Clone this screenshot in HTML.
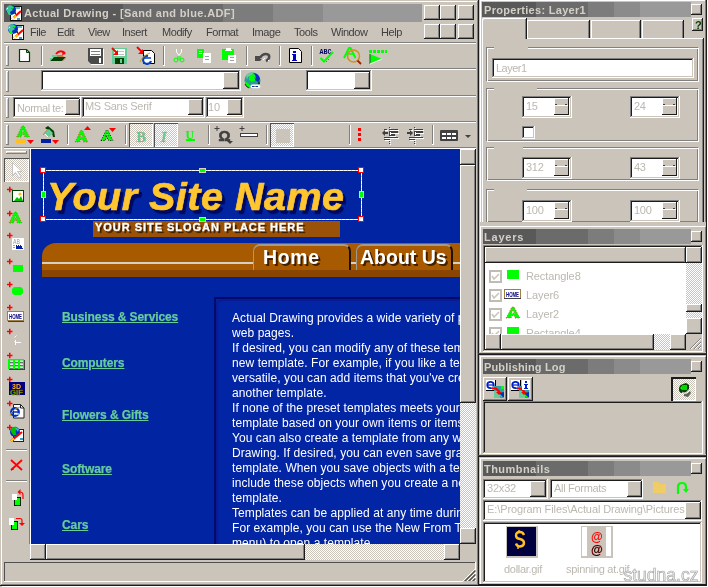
<!DOCTYPE html><html><head><meta charset="utf-8"><style>
html,body{margin:0;padding:0;width:708px;height:587px;overflow:hidden;background:#cac4bb;position:relative;font-family:"Liberation Sans",sans-serif}
div{position:absolute;box-sizing:border-box}
</style></head><body><div style="left:0;top:0;width:708px;height:587px;overflow:hidden;will-change:transform;background:#cac4bb">
<div style="left:0px;top:0px;width:479px;height:586px;background:#cac4bb;box-shadow:inset -1px -1px #1c1c1c,inset 1px 1px #cac4bb,inset -2px -2px #808080,inset 2px 2px #ffffff"></div>
<div style="left:2px;top:586px;width:477px;height:1px;background:#fff"></div>
<div style="left:4px;top:4px;width:119px;height:18px;background:#595959"></div>
<div style="left:123px;top:4px;width:100px;height:18px;background:#6b6b6b"></div>
<div style="left:223px;top:4px;width:50px;height:18px;background:#7c7c7c"></div>
<div style="left:273px;top:4px;width:50px;height:18px;background:#8b8b8b"></div>
<div style="left:323px;top:4px;width:99px;height:18px;background:#999999"></div>
<div style="left:24px;top:8px;font-size:11px;line-height:11px;color:#d4d0c8;font-weight:bold;font-style:normal;letter-spacing:0.36px;white-space:pre;">Actual Drawing - [Sand and blue.ADF]</div>
<div style="left:424px;top:5px;width:16px;height:15px;background:#cac4bb;box-shadow:inset -1px -1px #1c1c1c,inset 1px 1px #ffffff,inset -2px -2px #808080,inset 2px 2px #cac4bb;"></div>
<div style="left:440px;top:5px;width:16px;height:15px;background:#cac4bb;box-shadow:inset -1px -1px #1c1c1c,inset 1px 1px #ffffff,inset -2px -2px #808080,inset 2px 2px #cac4bb;"></div>
<div style="left:458px;top:5px;width:16px;height:15px;background:#cac4bb;box-shadow:inset -1px -1px #1c1c1c,inset 1px 1px #ffffff,inset -2px -2px #808080,inset 2px 2px #cac4bb;"></div>
<div style="left:424px;top:24px;width:16px;height:15px;background:#cac4bb;box-shadow:inset -1px -1px #1c1c1c,inset 1px 1px #ffffff,inset -2px -2px #808080,inset 2px 2px #cac4bb;"></div>
<div style="left:440px;top:24px;width:16px;height:15px;background:#cac4bb;box-shadow:inset -1px -1px #1c1c1c,inset 1px 1px #ffffff,inset -2px -2px #808080,inset 2px 2px #cac4bb;"></div>
<div style="left:458px;top:24px;width:16px;height:15px;background:#cac4bb;box-shadow:inset -1px -1px #1c1c1c,inset 1px 1px #ffffff,inset -2px -2px #808080,inset 2px 2px #cac4bb;"></div>
<div style="left:30px;top:27px;font-size:11px;line-height:11px;color:#404040;font-weight:normal;font-style:normal;letter-spacing:-0.45px;white-space:pre;">File</div>
<div style="left:57px;top:27px;font-size:11px;line-height:11px;color:#404040;font-weight:normal;font-style:normal;letter-spacing:-0.45px;white-space:pre;">Edit</div>
<div style="left:88px;top:27px;font-size:11px;line-height:11px;color:#404040;font-weight:normal;font-style:normal;letter-spacing:-0.45px;white-space:pre;">View</div>
<div style="left:122px;top:27px;font-size:11px;line-height:11px;color:#404040;font-weight:normal;font-style:normal;letter-spacing:-0.45px;white-space:pre;">Insert</div>
<div style="left:162px;top:27px;font-size:11px;line-height:11px;color:#404040;font-weight:normal;font-style:normal;letter-spacing:-0.45px;white-space:pre;">Modify</div>
<div style="left:206px;top:27px;font-size:11px;line-height:11px;color:#404040;font-weight:normal;font-style:normal;letter-spacing:-0.45px;white-space:pre;">Format</div>
<div style="left:252px;top:27px;font-size:11px;line-height:11px;color:#404040;font-weight:normal;font-style:normal;letter-spacing:-0.45px;white-space:pre;">Image</div>
<div style="left:294px;top:27px;font-size:11px;line-height:11px;color:#404040;font-weight:normal;font-style:normal;letter-spacing:-0.45px;white-space:pre;">Tools</div>
<div style="left:331px;top:27px;font-size:11px;line-height:11px;color:#404040;font-weight:normal;font-style:normal;letter-spacing:-0.45px;white-space:pre;">Window</div>
<div style="left:381px;top:27px;font-size:11px;line-height:11px;color:#404040;font-weight:normal;font-style:normal;letter-spacing:-0.45px;white-space:pre;">Help</div>
<div style="left:4px;top:42px;width:472px;height:1px;background:#808080"></div>
<div style="left:4px;top:43px;width:472px;height:1px;background:#ffffff"></div>
<div style="left:4px;top:68px;width:472px;height:1px;background:#808080"></div>
<div style="left:4px;top:69px;width:472px;height:1px;background:#ffffff"></div>
<div style="left:4px;top:95px;width:472px;height:1px;background:#808080"></div>
<div style="left:4px;top:96px;width:472px;height:1px;background:#ffffff"></div>
<div style="left:4px;top:121px;width:472px;height:1px;background:#808080"></div>
<div style="left:4px;top:122px;width:472px;height:1px;background:#ffffff"></div>
<div style="left:6px;top:46px;width:3px;height:20px;background:#cac4bb;box-shadow:inset -1px -1px #808080,inset 1px 1px #ffffff;"></div>
<div style="left:6px;top:71px;width:3px;height:21px;background:#cac4bb;box-shadow:inset -1px -1px #808080,inset 1px 1px #ffffff;"></div>
<div style="left:6px;top:98px;width:3px;height:20px;background:#cac4bb;box-shadow:inset -1px -1px #808080,inset 1px 1px #ffffff;"></div>
<div style="left:6px;top:125px;width:3px;height:20px;background:#cac4bb;box-shadow:inset -1px -1px #808080,inset 1px 1px #ffffff;"></div>
<div style="left:41px;top:46px;width:2px;height:20px;background:#cac4bb;box-shadow:inset -1px -1px #ffffff,inset 1px 1px #808080;"></div>
<div style="left:163px;top:46px;width:2px;height:20px;background:#cac4bb;box-shadow:inset -1px -1px #ffffff,inset 1px 1px #808080;"></div>
<div style="left:246px;top:46px;width:2px;height:20px;background:#cac4bb;box-shadow:inset -1px -1px #ffffff,inset 1px 1px #808080;"></div>
<div style="left:279px;top:46px;width:2px;height:20px;background:#cac4bb;box-shadow:inset -1px -1px #ffffff,inset 1px 1px #808080;"></div>
<div style="left:311px;top:46px;width:2px;height:20px;background:#cac4bb;box-shadow:inset -1px -1px #ffffff,inset 1px 1px #808080;"></div>
<div style="left:67px;top:125px;width:2px;height:20px;background:#cac4bb;box-shadow:inset -1px -1px #ffffff,inset 1px 1px #808080;"></div>
<div style="left:125px;top:125px;width:2px;height:20px;background:#cac4bb;box-shadow:inset -1px -1px #ffffff,inset 1px 1px #808080;"></div>
<div style="left:208px;top:125px;width:2px;height:20px;background:#cac4bb;box-shadow:inset -1px -1px #ffffff,inset 1px 1px #808080;"></div>
<div style="left:266px;top:125px;width:2px;height:20px;background:#cac4bb;box-shadow:inset -1px -1px #ffffff,inset 1px 1px #808080;"></div>
<div style="left:349px;top:125px;width:2px;height:20px;background:#cac4bb;box-shadow:inset -1px -1px #ffffff,inset 1px 1px #808080;"></div>
<div style="left:432px;top:125px;width:2px;height:20px;background:#cac4bb;box-shadow:inset -1px -1px #ffffff,inset 1px 1px #808080;"></div>
<div style="left:41px;top:70px;width:200px;height:21px;background:#fff;box-shadow:inset -1px -1px #ffffff,inset 1px 1px #808080,inset -2px -2px #cac4bb,inset 2px 2px #1c1c1c;"></div>
<div style="left:223px;top:72px;width:16px;height:17px;background:#cac4bb;box-shadow:inset -1px -1px #1c1c1c,inset 1px 1px #ffffff,inset -2px -2px #808080,inset 2px 2px #cac4bb;"></div>
<div style="left:306px;top:70px;width:66px;height:21px;background:#fff;box-shadow:inset -1px -1px #ffffff,inset 1px 1px #808080,inset -2px -2px #cac4bb,inset 2px 2px #1c1c1c;"></div>
<div style="left:354px;top:72px;width:16px;height:17px;background:#cac4bb;box-shadow:inset -1px -1px #1c1c1c,inset 1px 1px #ffffff,inset -2px -2px #808080,inset 2px 2px #cac4bb;"></div>
<div style="left:13px;top:97px;width:68px;height:21px;background:#fff;box-shadow:inset -1px -1px #ffffff,inset 1px 1px #808080,inset -2px -2px #cac4bb,inset 2px 2px #1c1c1c;"></div>
<div style="left:65px;top:99px;width:15px;height:16px;background:#cac4bb;box-shadow:inset -1px -1px #1c1c1c,inset 1px 1px #ffffff,inset -2px -2px #808080,inset 2px 2px #cac4bb;"></div>
<div style="left:17px;top:103px;font-size:11px;line-height:11px;color:#bcb8b0;font-weight:normal;font-style:normal;letter-spacing:-0.45px;white-space:pre;">Normal te:</div>
<div style="left:82px;top:97px;width:123px;height:21px;background:#fff;box-shadow:inset -1px -1px #ffffff,inset 1px 1px #808080,inset -2px -2px #cac4bb,inset 2px 2px #1c1c1c;"></div>
<div style="left:188px;top:99px;width:15px;height:16px;background:#cac4bb;box-shadow:inset -1px -1px #1c1c1c,inset 1px 1px #ffffff,inset -2px -2px #808080,inset 2px 2px #cac4bb;"></div>
<div style="left:85px;top:101px;font-size:11px;line-height:11px;color:#bcb8b0;font-weight:normal;font-style:normal;letter-spacing:-0.3px;white-space:pre;">MS Sans Serif</div>
<div style="left:206px;top:97px;width:38px;height:21px;background:#fff;box-shadow:inset -1px -1px #ffffff,inset 1px 1px #808080,inset -2px -2px #cac4bb,inset 2px 2px #1c1c1c;"></div>
<div style="left:227px;top:99px;width:15px;height:16px;background:#cac4bb;box-shadow:inset -1px -1px #1c1c1c,inset 1px 1px #ffffff,inset -2px -2px #808080,inset 2px 2px #cac4bb;"></div>
<div style="left:208px;top:102px;font-size:11px;line-height:11px;color:#bcb8b0;font-weight:normal;font-style:normal;letter-spacing:0px;white-space:pre;">10</div>
<div style="left:129px;top:123px;width:24px;height:24px;background:repeating-conic-gradient(#fff 0 25%,#cac4bb 0 50%) 0 0/2px 2px"></div>
<div style="left:129px;top:123px;width:24px;height:24px;box-shadow:inset 1px 1px #505050,inset -1px -1px #ffffff"></div>
<div style="left:154px;top:123px;width:24px;height:24px;background:repeating-conic-gradient(#fff 0 25%,#cac4bb 0 50%) 0 0/2px 2px"></div>
<div style="left:154px;top:123px;width:24px;height:24px;box-shadow:inset 1px 1px #505050,inset -1px -1px #ffffff"></div>
<div style="left:270px;top:123px;width:24px;height:24px;background:repeating-conic-gradient(#fff 0 25%,#cac4bb 0 50%) 0 0/2px 2px"></div>
<div style="left:270px;top:123px;width:24px;height:24px;box-shadow:inset 1px 1px #505050,inset -1px -1px #ffffff"></div>
<div style="left:6px;top:151px;width:21px;height:3px;background:#cac4bb;box-shadow:inset -1px -1px #808080,inset 1px 1px #ffffff;"></div>
<div style="left:4px;top:158px;width:25px;height:24px;background:repeating-conic-gradient(#fff 0 25%,#cac4bb 0 50%) 0 0/2px 2px"></div>
<div style="left:4px;top:158px;width:25px;height:24px;box-shadow:inset 1px 1px #505050,inset -1px -1px #ffffff"></div>
<div style="left:4px;top:147px;width:472px;height:1px;background:#808080"></div>
<div style="left:4px;top:148px;width:472px;height:1px;background:#ffffff"></div>
<div style="left:29px;top:149px;width:1px;height:395px;background:#808080"></div>
<div style="left:30px;top:149px;width:1px;height:395px;background:#ffffff"></div>
<div style="left:6px;top:449px;width:21px;height:1px;background:#808080"></div>
<div style="left:6px;top:450px;width:21px;height:1px;background:#ffffff"></div>
<div style="left:6px;top:480px;width:21px;height:1px;background:#808080"></div>
<div style="left:6px;top:481px;width:21px;height:1px;background:#ffffff"></div>
<div style="left:31px;top:149px;width:429px;height:395px;background:#0024a2;overflow:hidden"></div>
<div style="left:31px;top:149px;width:429px;height:395px;overflow:hidden"><div style="left:-31px;top:-149px;width:708px;height:587px"><div style="left:47px;top:177px;font-size:39.5px;line-height:39.5px;color:#ffc630;font-weight:bold;font-style:italic;letter-spacing:0.5px;white-space:pre;-webkit-text-stroke:0.7px #ffc630;text-shadow:3px 3px 0 #000860,3px 4px 1px #000860">Your Site Name</div><div style="left:93px;top:221px;width:247px;height:16px;background:#9a5208"></div><div style="left:95px;top:222px;font-size:11px;line-height:11px;color:#fff;font-weight:bold;font-style:normal;letter-spacing:0.97px;white-space:pre;-webkit-text-stroke:0.3px #fff;text-shadow:2px 2px 1px #301800">YOUR SITE SLOGAN PLACE HERE</div><div style="left:42px;top:243px;width:418px;height:20px;background:#a85a00;border-top-left-radius:14px 13px"></div><div style="left:42px;top:262px;width:418px;height:2px;background:#d4d0c4"></div><div style="left:42px;top:264px;width:418px;height:6px;background:#a85a00"></div><div style="left:42px;top:270px;width:418px;height:7px;background:#8a4600"></div><div style="left:253px;top:244px;width:98px;height:26px;background:#a85a00;border-top-left-radius:7px;border-top-right-radius:7px;border-top:2px solid #a09a94;border-left:1px solid #a09a94;border-right:2px solid #201000"></div><div style="left:263px;top:248px;font-size:19.5px;line-height:19.5px;color:#fff;font-weight:bold;font-style:normal;letter-spacing:0.6px;white-space:pre;text-shadow:2px 2px 0 #402000">Home</div><div style="left:356px;top:244px;width:97px;height:26px;background:#a85a00;border-top-left-radius:7px;border-top-right-radius:7px;border-top:2px solid #a09a94;border-left:1px solid #a09a94;border-right:2px solid #201000"></div><div style="left:360px;top:248px;font-size:19.5px;line-height:19.5px;color:#fff;font-weight:bold;font-style:normal;letter-spacing:0px;white-space:pre;text-shadow:2px 2px 0 #402000">About Us</div><div style="left:62px;top:311px;font-size:12px;line-height:12px;color:#66cc99;font-weight:bold;font-style:normal;letter-spacing:-0.1px;white-space:pre;text-decoration:underline;-webkit-text-stroke:0.25px #66cc99">Business &amp; Services</div><div style="left:62px;top:357px;font-size:12px;line-height:12px;color:#66cc99;font-weight:bold;font-style:normal;letter-spacing:-0.1px;white-space:pre;text-decoration:underline;-webkit-text-stroke:0.25px #66cc99">Computers</div><div style="left:62px;top:409px;font-size:12px;line-height:12px;color:#66cc99;font-weight:bold;font-style:normal;letter-spacing:-0.1px;white-space:pre;text-decoration:underline;-webkit-text-stroke:0.25px #66cc99">Flowers &amp; Gifts</div><div style="left:62px;top:463px;font-size:12px;line-height:12px;color:#66cc99;font-weight:bold;font-style:normal;letter-spacing:-0.1px;white-space:pre;text-decoration:underline;-webkit-text-stroke:0.25px #66cc99">Software</div><div style="left:62px;top:519px;font-size:12px;line-height:12px;color:#66cc99;font-weight:bold;font-style:normal;letter-spacing:-0.1px;white-space:pre;text-decoration:underline;-webkit-text-stroke:0.25px #66cc99">Cars</div><div style="left:214px;top:297px;width:260px;height:260px;border:2px solid #000a6a;background:#0024a2"></div><div style="left:216px;top:299px;width:258px;height:258px;border-top-left-radius:6px;border-top:2px solid #0a1a90;border-left:2px solid #0a1a90;background:#0225a5"></div><div style="left:232px;top:312px;font-size:12px;line-height:12px;color:#fff;font-weight:normal;font-style:normal;letter-spacing:0.07px;white-space:pre;">Actual Drawing provides a wide variety of predesigned templates for</div><div style="left:232px;top:327px;font-size:12px;line-height:12px;color:#fff;font-weight:normal;font-style:normal;letter-spacing:0.07px;white-space:pre;">web pages.</div><div style="left:232px;top:342px;font-size:12px;line-height:12px;color:#fff;font-weight:normal;font-style:normal;letter-spacing:0.07px;white-space:pre;">If desired, you can modify any of these templates or create your own</div><div style="left:232px;top:357px;font-size:12px;line-height:12px;color:#fff;font-weight:normal;font-style:normal;letter-spacing:0.07px;white-space:pre;">new template. For example, if you like a template but want it more</div><div style="left:232px;top:372px;font-size:12px;line-height:12px;color:#fff;font-weight:normal;font-style:normal;letter-spacing:0.07px;white-space:pre;">versatile, you can add items that you've created yourself or even from</div><div style="left:232px;top:387px;font-size:12px;line-height:12px;color:#fff;font-weight:normal;font-style:normal;letter-spacing:0.07px;white-space:pre;">another template.</div><div style="left:232px;top:402px;font-size:12px;line-height:12px;color:#fff;font-weight:normal;font-style:normal;letter-spacing:0.07px;white-space:pre;">If none of the preset templates meets your needs, you can create a new</div><div style="left:232px;top:417px;font-size:12px;line-height:12px;color:#fff;font-weight:normal;font-style:normal;letter-spacing:0.07px;white-space:pre;">template based on your own items or items from other sources.</div><div style="left:232px;top:432px;font-size:12px;line-height:12px;color:#fff;font-weight:normal;font-style:normal;letter-spacing:0.07px;white-space:pre;">You can also create a template from any web page opened in Actual</div><div style="left:232px;top:447px;font-size:12px;line-height:12px;color:#fff;font-weight:normal;font-style:normal;letter-spacing:0.07px;white-space:pre;">Drawing. If desired, you can even save graphics as a part of the</div><div style="left:232px;top:462px;font-size:12px;line-height:12px;color:#fff;font-weight:normal;font-style:normal;letter-spacing:0.07px;white-space:pre;">template. When you save objects with a template, Actual Drawing will</div><div style="left:232px;top:477px;font-size:12px;line-height:12px;color:#fff;font-weight:normal;font-style:normal;letter-spacing:0.07px;white-space:pre;">include these objects when you create a new page based on that</div><div style="left:232px;top:492px;font-size:12px;line-height:12px;color:#fff;font-weight:normal;font-style:normal;letter-spacing:0.07px;white-space:pre;">template.</div><div style="left:232px;top:507px;font-size:12px;line-height:12px;color:#fff;font-weight:normal;font-style:normal;letter-spacing:0.07px;white-space:pre;">Templates can be applied at any time during the editing process.</div><div style="left:232px;top:522px;font-size:12px;line-height:12px;color:#fff;font-weight:normal;font-style:normal;letter-spacing:0.07px;white-space:pre;">For example, you can use the New From Template command (File</div><div style="left:232px;top:537px;font-size:12px;line-height:12px;color:#fff;font-weight:normal;font-style:normal;letter-spacing:0.07px;white-space:pre;">menu) to open a template.</div><svg style="position:absolute;left:0;top:0" width="708" height="587" shape-rendering="crispEdges"><rect x="43.5" y="170.5" width="318" height="49" fill="none" stroke="#d8d0c0" stroke-width="1"/><rect x="43.5" y="170.5" width="318" height="49" fill="none" stroke="#fff" stroke-width="1" stroke-dasharray="3 1"/></svg><div style="left:40px;top:167px;width:6px;height:6px;background:#fff;border:1px solid #ff0000"></div><div style="left:358px;top:167px;width:6px;height:6px;background:#fff;border:1px solid #ff0000"></div><div style="left:40px;top:216px;width:6px;height:6px;background:#fff;border:1px solid #ff0000"></div><div style="left:358px;top:216px;width:6px;height:6px;background:#fff;border:1px solid #ff0000"></div><div style="left:199px;top:168px;width:7px;height:5px;background:#00ff00;border:1px solid #d8d0c0"></div><div style="left:199px;top:217px;width:7px;height:5px;background:#00ff00;border:1px solid #d8d0c0"></div><div style="left:41px;top:191px;width:5px;height:7px;background:#00ff00;border:1px solid #d8d0c0"></div><div style="left:359px;top:191px;width:5px;height:7px;background:#00ff00;border:1px solid #d8d0c0"></div></div></div>
<div style="left:460px;top:149px;width:16px;height:395px;background:repeating-conic-gradient(#fff 0 25%,#cac4bb 0 50%) 0 0/2px 2px"></div>
<div style="left:460px;top:149px;width:16px;height:16px;background:#cac4bb;box-shadow:inset -1px -1px #1c1c1c,inset 1px 1px #ffffff,inset -2px -2px #808080,inset 2px 2px #cac4bb;"></div>
<div style="left:460px;top:165px;width:16px;height:238px;background:#cac4bb;box-shadow:inset -1px -1px #1c1c1c,inset 1px 1px #ffffff,inset -2px -2px #808080,inset 2px 2px #cac4bb;"></div>
<div style="left:460px;top:528px;width:16px;height:16px;background:#cac4bb;box-shadow:inset -1px -1px #1c1c1c,inset 1px 1px #ffffff,inset -2px -2px #808080,inset 2px 2px #cac4bb;"></div>
<div style="left:30px;top:544px;width:430px;height:16px;background:repeating-conic-gradient(#fff 0 25%,#cac4bb 0 50%) 0 0/2px 2px"></div>
<div style="left:30px;top:544px;width:16px;height:16px;background:#cac4bb;box-shadow:inset -1px -1px #1c1c1c,inset 1px 1px #ffffff,inset -2px -2px #808080,inset 2px 2px #cac4bb;"></div>
<div style="left:46px;top:544px;width:259px;height:16px;background:#cac4bb;box-shadow:inset -1px -1px #1c1c1c,inset 1px 1px #ffffff,inset -2px -2px #808080,inset 2px 2px #cac4bb;"></div>
<div style="left:444px;top:544px;width:16px;height:16px;background:#cac4bb;box-shadow:inset -1px -1px #1c1c1c,inset 1px 1px #ffffff,inset -2px -2px #808080,inset 2px 2px #cac4bb;"></div>
<div style="left:460px;top:544px;width:16px;height:16px;background:#cac4bb"></div>
<div style="left:4px;top:562px;width:472px;height:20px;background:#cac4bb;box-shadow:inset -1px -1px #ffffff,inset 1px 1px #505050"></div>
<div style="left:479px;top:0px;width:229px;height:587px;background:#cac4bb"></div>
<div style="left:480px;top:0px;width:1px;height:587px;background:#ffffff"></div>
<div style="left:480px;top:0px;width:228px;height:1px;background:#ffffff"></div>
<div style="left:705px;top:0px;width:1px;height:587px;background:#808080"></div>
<div style="left:706px;top:0px;width:1px;height:587px;background:#1c1c1c"></div>
<div style="left:707px;top:0px;width:1px;height:587px;background:#ffffff"></div>
<div style="left:482px;top:2px;width:54px;height:15px;background:#595959"></div>
<div style="left:536px;top:2px;width:52px;height:15px;background:#6b6b6b"></div>
<div style="left:588px;top:2px;width:26px;height:15px;background:#7c7c7c"></div>
<div style="left:614px;top:2px;width:26px;height:15px;background:#8b8b8b"></div>
<div style="left:640px;top:2px;width:51px;height:15px;background:#999999"></div>
<div style="left:484px;top:5px;font-size:11px;line-height:11px;color:#d4d0c8;font-weight:bold;font-style:normal;letter-spacing:0.3px;white-space:pre;">Properties: Layer1</div>
<div style="left:691px;top:4px;width:11px;height:11px;background:#cac4bb;box-shadow:inset -1px -1px #1c1c1c,inset 1px 1px #ffffff,inset -2px -2px #808080,inset 2px 2px #cac4bb;"></div>
<div style="left:692px;top:18px;width:11px;height:13px;background:#cac4bb;box-shadow:inset -1px -1px #1c1c1c,inset 1px 1px #ffffff,inset -2px -2px #808080,inset 2px 2px #cac4bb;"></div>
<div style="left:695px;top:19px;font:bold 11px Liberation Sans;color:#004000;line-height:12px">?</div>
<div style="left:482px;top:38px;width:222px;height:188px;background:#cac4bb;box-shadow:inset -1px -1px #1c1c1c,inset 1px 1px #ffffff,inset -2px -2px #808080,inset 2px 2px #cac4bb;"></div>
<div style="left:527px;top:20px;width:63px;height:18px;background:#cac4bb;box-shadow:inset -1px 0 #1c1c1c,inset 1px 1px #ffffff,inset -2px 0 #808080"></div>
<div style="left:591px;top:20px;width:50px;height:18px;background:#cac4bb;box-shadow:inset -1px 0 #1c1c1c,inset 1px 1px #ffffff,inset -2px 0 #808080"></div>
<div style="left:642px;top:20px;width:42px;height:18px;background:#cac4bb;box-shadow:inset -1px 0 #1c1c1c,inset 1px 1px #ffffff,inset -2px 0 #808080"></div>
<div style="left:482px;top:18px;width:45px;height:21px;background:#cac4bb;border-top-left-radius:2px;box-shadow:inset -1px 0 #1c1c1c,inset 1px 1px #ffffff,inset -2px 0 #808080"></div>
<div style="left:483px;top:38px;width:42px;height:2px;background:#cac4bb"></div>
<div style="left:486px;top:47px;width:213px;height:35px;box-shadow:inset 1px 1px #808080,inset -1px -1px #ffffff #808080"></div>
<div style="left:486px;top:47px;width:213px;height:35px;border-top:1px solid #808080;border-left:1px solid #808080;border-right:1px solid #ffffff;border-bottom:1px solid #ffffff;box-shadow:inset 1px 1px #ffffff,inset -1px -1px #808080"></div>
<div style="left:494px;top:47px;width:34px;height:2px;background:#cac4bb"></div>
<div style="left:492px;top:58px;width:202px;height:20px;background:#fff;box-shadow:inset -1px -1px #ffffff,inset 1px 1px #808080,inset -2px -2px #cac4bb,inset 2px 2px #1c1c1c;"></div>
<div style="left:496px;top:63px;font-size:11px;line-height:11px;color:#bcb8b0;font-weight:normal;font-style:normal;letter-spacing:-0.5px;white-space:pre;">Layer1</div>
<div style="left:486px;top:88px;width:213px;height:54px;box-shadow:inset 1px 1px #808080,inset -1px -1px #ffffff #808080"></div>
<div style="left:486px;top:88px;width:213px;height:54px;border-top:1px solid #808080;border-left:1px solid #808080;border-right:1px solid #ffffff;border-bottom:1px solid #ffffff;box-shadow:inset 1px 1px #ffffff,inset -1px -1px #808080"></div>
<div style="left:494px;top:88px;width:43px;height:2px;background:#cac4bb"></div>
<div style="left:522px;top:96px;width:50px;height:22px;background:#fff;box-shadow:inset -1px -1px #ffffff,inset 1px 1px #808080,inset -2px -2px #cac4bb,inset 2px 2px #1c1c1c;"></div>
<div style="left:526px;top:101px;font-size:11px;line-height:11px;color:#bcb8b0;font-weight:normal;font-style:normal;letter-spacing:-0.3px;white-space:pre;">15</div>
<div style="left:554px;top:98px;width:15px;height:17px;background:#cac4bb;box-shadow:inset -1px -1px #1c1c1c,inset 1px 1px #fff"></div>
<div style="left:555px;top:105px;width:13px;height:1px;background:#fff"></div>
<div style="left:555px;top:104px;width:2px;height:1px;background:#404040"></div>
<div style="left:565px;top:104px;width:2px;height:1px;background:#404040"></div>
<div style="left:630px;top:96px;width:50px;height:22px;background:#fff;box-shadow:inset -1px -1px #ffffff,inset 1px 1px #808080,inset -2px -2px #cac4bb,inset 2px 2px #1c1c1c;"></div>
<div style="left:634px;top:101px;font-size:11px;line-height:11px;color:#bcb8b0;font-weight:normal;font-style:normal;letter-spacing:-0.3px;white-space:pre;">24</div>
<div style="left:662px;top:98px;width:15px;height:17px;background:#cac4bb;box-shadow:inset -1px -1px #1c1c1c,inset 1px 1px #fff"></div>
<div style="left:663px;top:105px;width:13px;height:1px;background:#fff"></div>
<div style="left:663px;top:104px;width:2px;height:1px;background:#404040"></div>
<div style="left:673px;top:104px;width:2px;height:1px;background:#404040"></div>
<div style="left:522px;top:126px;width:13px;height:13px;background:#fff;box-shadow:inset -1px -1px #ffffff,inset 1px 1px #808080,inset -2px -2px #cac4bb,inset 2px 2px #1c1c1c;"></div>
<div style="left:486px;top:147px;width:213px;height:34px;box-shadow:inset 1px 1px #808080,inset -1px -1px #ffffff #808080"></div>
<div style="left:486px;top:147px;width:213px;height:34px;border-top:1px solid #808080;border-left:1px solid #808080;border-right:1px solid #ffffff;border-bottom:1px solid #ffffff;box-shadow:inset 1px 1px #ffffff,inset -1px -1px #808080"></div>
<div style="left:494px;top:147px;width:29px;height:2px;background:#cac4bb"></div>
<div style="left:522px;top:157px;width:50px;height:22px;background:#fff;box-shadow:inset -1px -1px #ffffff,inset 1px 1px #808080,inset -2px -2px #cac4bb,inset 2px 2px #1c1c1c;"></div>
<div style="left:526px;top:162px;font-size:11px;line-height:11px;color:#bcb8b0;font-weight:normal;font-style:normal;letter-spacing:-0.3px;white-space:pre;">312</div>
<div style="left:554px;top:159px;width:15px;height:17px;background:#cac4bb;box-shadow:inset -1px -1px #1c1c1c,inset 1px 1px #fff"></div>
<div style="left:555px;top:166px;width:13px;height:1px;background:#fff"></div>
<div style="left:555px;top:165px;width:2px;height:1px;background:#404040"></div>
<div style="left:565px;top:165px;width:2px;height:1px;background:#404040"></div>
<div style="left:630px;top:157px;width:50px;height:22px;background:#fff;box-shadow:inset -1px -1px #ffffff,inset 1px 1px #808080,inset -2px -2px #cac4bb,inset 2px 2px #1c1c1c;"></div>
<div style="left:634px;top:162px;font-size:11px;line-height:11px;color:#bcb8b0;font-weight:normal;font-style:normal;letter-spacing:-0.3px;white-space:pre;">43</div>
<div style="left:662px;top:159px;width:15px;height:17px;background:#cac4bb;box-shadow:inset -1px -1px #1c1c1c,inset 1px 1px #fff"></div>
<div style="left:663px;top:166px;width:13px;height:1px;background:#fff"></div>
<div style="left:663px;top:165px;width:2px;height:1px;background:#404040"></div>
<div style="left:673px;top:165px;width:2px;height:1px;background:#404040"></div>
<div style="left:486px;top:189px;width:213px;height:34px;box-shadow:inset 1px 1px #808080,inset -1px -1px #ffffff #808080"></div>
<div style="left:486px;top:189px;width:213px;height:34px;border-top:1px solid #808080;border-left:1px solid #808080;border-right:1px solid #ffffff;border-bottom:1px solid #ffffff;box-shadow:inset 1px 1px #ffffff,inset -1px -1px #808080"></div>
<div style="left:494px;top:189px;width:33px;height:2px;background:#cac4bb"></div>
<div style="left:522px;top:200px;width:50px;height:22px;background:#fff;box-shadow:inset -1px -1px #ffffff,inset 1px 1px #808080,inset -2px -2px #cac4bb,inset 2px 2px #1c1c1c;"></div>
<div style="left:526px;top:205px;font-size:11px;line-height:11px;color:#bcb8b0;font-weight:normal;font-style:normal;letter-spacing:-0.3px;white-space:pre;">100</div>
<div style="left:554px;top:202px;width:15px;height:17px;background:#cac4bb;box-shadow:inset -1px -1px #1c1c1c,inset 1px 1px #fff"></div>
<div style="left:555px;top:209px;width:13px;height:1px;background:#fff"></div>
<div style="left:555px;top:208px;width:2px;height:1px;background:#404040"></div>
<div style="left:565px;top:208px;width:2px;height:1px;background:#404040"></div>
<div style="left:630px;top:200px;width:50px;height:22px;background:#fff;box-shadow:inset -1px -1px #ffffff,inset 1px 1px #808080,inset -2px -2px #cac4bb,inset 2px 2px #1c1c1c;"></div>
<div style="left:634px;top:205px;font-size:11px;line-height:11px;color:#bcb8b0;font-weight:normal;font-style:normal;letter-spacing:-0.3px;white-space:pre;">100</div>
<div style="left:662px;top:202px;width:15px;height:17px;background:#cac4bb;box-shadow:inset -1px -1px #1c1c1c,inset 1px 1px #fff"></div>
<div style="left:663px;top:209px;width:13px;height:1px;background:#fff"></div>
<div style="left:663px;top:208px;width:2px;height:1px;background:#404040"></div>
<div style="left:673px;top:208px;width:2px;height:1px;background:#404040"></div>
<div style="left:479px;top:222px;width:227px;height:5px;background:#cac4bb"></div>
<div style="left:480px;top:226px;width:225px;height:1px;background:#ffffff"></div>
<div style="left:483px;top:229px;width:53px;height:15px;background:#595959"></div>
<div style="left:536px;top:229px;width:52px;height:15px;background:#6b6b6b"></div>
<div style="left:588px;top:229px;width:26px;height:15px;background:#7c7c7c"></div>
<div style="left:614px;top:229px;width:26px;height:15px;background:#8b8b8b"></div>
<div style="left:640px;top:229px;width:51px;height:15px;background:#999999"></div>
<div style="left:484px;top:232px;font-size:11px;line-height:11px;color:#d4d0c8;font-weight:bold;font-style:normal;letter-spacing:0.8px;white-space:pre;">Layers</div>
<div style="left:691px;top:231px;width:11px;height:11px;background:#cac4bb;box-shadow:inset -1px -1px #1c1c1c,inset 1px 1px #ffffff,inset -2px -2px #808080,inset 2px 2px #cac4bb;"></div>
<div style="left:483px;top:245px;width:220px;height:107px;background:#fff;box-shadow:inset -1px -1px #ffffff,inset 1px 1px #808080,inset -2px -2px #cac4bb,inset 2px 2px #1c1c1c;"></div>
<div style="left:485px;top:247px;width:201px;height:16px;background:#cac4bb;box-shadow:inset -1px -1px #1c1c1c,inset 1px 1px #ffffff,inset -2px -2px #808080,inset 2px 2px #cac4bb;"></div>
<div style="left:686px;top:247px;width:16px;height:16px;background:#cac4bb;box-shadow:inset -1px -1px #1c1c1c,inset 1px 1px #ffffff,inset -2px -2px #808080,inset 2px 2px #cac4bb;"></div>
<div style="left:489px;top:270px;width:13px;height:13px;border:2px solid #c0bcb4;background:#fff"></div>
<svg style="position:absolute;left:489px;top:270px" width="13" height="13"><path d="M3 6l2 3 5-5" fill="none" stroke="#c8c4bc" stroke-width="1.5"/></svg>
<div style="left:526px;top:271px;font-size:11px;line-height:11px;color:#bcb8b0;font-weight:normal;font-style:normal;letter-spacing:-0.1px;white-space:pre;">Rectangle8</div>
<div style="left:489px;top:289px;width:13px;height:13px;border:2px solid #c0bcb4;background:#fff"></div>
<svg style="position:absolute;left:489px;top:289px" width="13" height="13"><path d="M3 6l2 3 5-5" fill="none" stroke="#c8c4bc" stroke-width="1.5"/></svg>
<div style="left:526px;top:290px;font-size:11px;line-height:11px;color:#bcb8b0;font-weight:normal;font-style:normal;letter-spacing:-0.1px;white-space:pre;">Layer6</div>
<div style="left:489px;top:308px;width:13px;height:13px;border:2px solid #c0bcb4;background:#fff"></div>
<svg style="position:absolute;left:489px;top:308px" width="13" height="13"><path d="M3 6l2 3 5-5" fill="none" stroke="#c8c4bc" stroke-width="1.5"/></svg>
<div style="left:526px;top:309px;font-size:11px;line-height:11px;color:#bcb8b0;font-weight:normal;font-style:normal;letter-spacing:-0.1px;white-space:pre;">Layer2</div>
<div style="left:489px;top:327px;width:13px;height:13px;border:2px solid #c0bcb4;background:#fff"></div>
<svg style="position:absolute;left:489px;top:327px" width="13" height="13"><path d="M3 6l2 3 5-5" fill="none" stroke="#c8c4bc" stroke-width="1.5"/></svg>
<div style="left:526px;top:328px;font-size:11px;line-height:11px;color:#bcb8b0;font-weight:normal;font-style:normal;letter-spacing:-0.1px;white-space:pre;">Rectangle4</div>
<svg style="position:absolute;left:0;top:0" width="708" height="587"><rect x="507" y="270" width="12" height="9" fill="#00ff00"/><rect x="507" y="327" width="12" height="9" fill="#00ff00"/><rect x="504.5" y="289.5" width="16" height="9" fill="#fff" stroke="#a08040"/><rect x="504" y="298" width="17" height="1" fill="#404040"/><text x="506" y="296.5" font-family="Liberation Sans" font-weight="bold" font-size="6.5" fill="#000080" textLength="13" lengthAdjust="spacingAndGlyphs">HOME</text><path d="M506.00 318.00L507.12 316.35L511.88 307.00L514.12 307.00L518.88 316.35L520.00 318.00L514.96 318.00L514.40 315.58L511.60 315.58L511.04 318.00ZM511.32 313.38L513.00 310.30L514.68 313.38Z" fill="#00ff00" fill-rule="evenodd" stroke="#c05a20" stroke-width="0.9" stroke-dasharray="1 1.6"/></svg>
<div style="left:686px;top:263px;width:16px;height:71px;background:repeating-conic-gradient(#fff 0 25%,#cac4bb 0 50%) 0 0/2px 2px"></div>
<div style="left:686px;top:304px;width:16px;height:8px;background:#cac4bb;box-shadow:inset -1px -1px #1c1c1c,inset 1px 1px #ffffff,inset -2px -2px #808080,inset 2px 2px #cac4bb;"></div>
<div style="left:686px;top:318px;width:16px;height:16px;background:#cac4bb;box-shadow:inset -1px -1px #1c1c1c,inset 1px 1px #ffffff,inset -2px -2px #808080,inset 2px 2px #cac4bb;"></div>
<div style="left:485px;top:334px;width:201px;height:16px;background:repeating-conic-gradient(#fff 0 25%,#cac4bb 0 50%) 0 0/2px 2px"></div>
<div style="left:485px;top:334px;width:16px;height:16px;background:#cac4bb;box-shadow:inset -1px -1px #1c1c1c,inset 1px 1px #ffffff,inset -2px -2px #808080,inset 2px 2px #cac4bb;"></div>
<div style="left:501px;top:334px;width:153px;height:16px;background:#cac4bb;box-shadow:inset -1px -1px #1c1c1c,inset 1px 1px #ffffff,inset -2px -2px #808080,inset 2px 2px #cac4bb;"></div>
<div style="left:670px;top:334px;width:16px;height:16px;background:#cac4bb;box-shadow:inset -1px -1px #1c1c1c,inset 1px 1px #ffffff,inset -2px -2px #808080,inset 2px 2px #cac4bb;"></div>
<div style="left:686px;top:334px;width:16px;height:16px;background:#cac4bb"></div>
<svg style="position:absolute;left:686px;top:334px" width="16" height="16"><path d="M15 4L4 15M15 8L8 15M15 12L12 15" stroke="#808080" stroke-width="1"/><path d="M15 5L5 15M15 9L9 15M15 13L13 15" stroke="#fff" stroke-width="1"/></svg>
<div style="left:479px;top:352px;width:227px;height:5px;background:#cac4bb"></div>
<div style="left:478px;top:353px;width:228px;height:1px;background:#404040"></div>
<div style="left:478px;top:354px;width:228px;height:1px;background:#1c1c1c"></div>
<div style="left:480px;top:356px;width:225px;height:1px;background:#ffffff"></div>
<div style="left:483px;top:359px;width:53px;height:15px;background:#595959"></div>
<div style="left:536px;top:359px;width:52px;height:15px;background:#6b6b6b"></div>
<div style="left:588px;top:359px;width:26px;height:15px;background:#7c7c7c"></div>
<div style="left:614px;top:359px;width:26px;height:15px;background:#8b8b8b"></div>
<div style="left:640px;top:359px;width:51px;height:15px;background:#999999"></div>
<div style="left:484px;top:362px;font-size:11px;line-height:11px;color:#d4d0c8;font-weight:bold;font-style:normal;letter-spacing:0.15px;white-space:pre;">Publishing Log</div>
<div style="left:691px;top:361px;width:11px;height:11px;background:#cac4bb;box-shadow:inset -1px -1px #1c1c1c,inset 1px 1px #ffffff,inset -2px -2px #808080,inset 2px 2px #cac4bb;"></div>
<div style="left:483px;top:377px;width:24px;height:24px;background:#cac4bb;box-shadow:inset -1px -1px #1c1c1c,inset 1px 1px #ffffff,inset -2px -2px #808080,inset 2px 2px #cac4bb;"></div>
<div style="left:508px;top:377px;width:25px;height:24px;background:#cac4bb;box-shadow:inset -1px -1px #1c1c1c,inset 1px 1px #ffffff,inset -2px -2px #808080,inset 2px 2px #cac4bb;"></div>
<div style="left:671px;top:377px;width:25px;height:24px;box-shadow:inset 2px 2px #1c1c1c,inset -1px -1px #ffffff"></div>
<div style="left:673px;top:379px;width:22px;height:21px;background:repeating-conic-gradient(#fff 0 25%,#cac4bb 0 50%) 0 0/2px 2px"></div>
<svg style="position:absolute;left:0;top:0" width="708" height="587"><rect x="486" y="380" width="9" height="10" fill="#fff"/><circle cx="490.5" cy="385" r="3.2" fill="none" stroke="#0020c0" stroke-width="1.8"/><path d="M487.5 385h6" stroke="#0020c0" stroke-width="1.2"/><path d="M491 387h3" stroke="#fff" stroke-width="1"/><path d="M488 381l1 1M492 381l1 1" stroke="#40c0c0" stroke-width="0.8"/><path d="M486 390.5h9" stroke="#000"/><path d="M495.5 380v10" stroke="#000"/><rect x="494" y="386" width="10" height="12" fill="#30a0a0"/><path d="M494 391h4l2 3v4h-6z" fill="#66cc99"/><path d="M499 393l4 4h1v-5z" fill="#0030c0"/><path d="M497 392l5 5" stroke="#00ff00"/><rect x="501" y="386" width="3" height="3" fill="#00ff00"/><path d="M492 388.5h4l3 3v2" fill="none" stroke="#ff0000" stroke-width="2.2"/><path d="M496 392h6l-3 3z" fill="#ff0000"/><rect x="511" y="380" width="9" height="10" fill="#fff"/><circle cx="515.5" cy="385" r="3.2" fill="none" stroke="#0020c0" stroke-width="1.8"/><path d="M512.5 385h6" stroke="#0020c0" stroke-width="1.2"/><path d="M516 387h3" stroke="#fff" stroke-width="1"/><path d="M513 381l1 1M517 381l1 1" stroke="#40c0c0" stroke-width="0.8"/><path d="M511 390.5h9" stroke="#000"/><path d="M520.5 380v10" stroke="#000"/><rect x="519" y="386" width="10" height="12" fill="#30a0a0"/><path d="M519 391h4l2 3v4h-6z" fill="#66cc99"/><path d="M524 393l4 4h1v-5z" fill="#0030c0"/><path d="M522 392l5 5" stroke="#00ff00"/><rect x="526" y="386" width="3" height="3" fill="#00ff00"/><path d="M517 388.5h4l3 3v2" fill="none" stroke="#ff0000" stroke-width="2.2"/><path d="M521 392h6l-3 3z" fill="#ff0000"/><rect x="522" y="380" width="8" height="10" fill="#fff"/><rect x="525" y="381" width="2" height="2" fill="#0020c0"/><rect x="524" y="384" width="4" height="1" fill="#0020c0"/><rect x="525" y="385" width="2" height="3" fill="#0020c0"/><rect x="524" y="388" width="4" height="1" fill="#0020c0"/><path d="M679 389q0-4 4-5l3-1 3 2v4l-3 3-4 1q-3 0-3-4z" fill="#004000"/><path d="M682 385h5v5h-5z" fill="#00ff00" opacity="0.8"/><path d="M680 388l2-2v4z" fill="#00ff00"/><path d="M684 394q3 1 6-3l1 2-3 4-4-1z" fill="#606060"/><path d="M682 392q2 2 5 1" stroke="#c8c8c8" fill="none"/></svg>
<div style="left:483px;top:401px;width:220px;height:53px;background:#cac4bb;box-shadow:inset -1px -1px #ffffff,inset 1px 1px #808080,inset -2px -2px #cac4bb,inset 2px 2px #1c1c1c;"></div>
<div style="left:479px;top:454px;width:227px;height:5px;background:#cac4bb"></div>
<div style="left:478px;top:455px;width:228px;height:1px;background:#404040"></div>
<div style="left:478px;top:456px;width:228px;height:1px;background:#1c1c1c"></div>
<div style="left:480px;top:458px;width:225px;height:1px;background:#ffffff"></div>
<div style="left:483px;top:461px;width:53px;height:15px;background:#595959"></div>
<div style="left:536px;top:461px;width:52px;height:15px;background:#6b6b6b"></div>
<div style="left:588px;top:461px;width:26px;height:15px;background:#7c7c7c"></div>
<div style="left:614px;top:461px;width:26px;height:15px;background:#8b8b8b"></div>
<div style="left:640px;top:461px;width:51px;height:15px;background:#999999"></div>
<div style="left:484px;top:464px;font-size:11px;line-height:11px;color:#d4d0c8;font-weight:bold;font-style:normal;letter-spacing:0.45px;white-space:pre;">Thumbnails</div>
<div style="left:691px;top:463px;width:11px;height:11px;background:#cac4bb;box-shadow:inset -1px -1px #1c1c1c,inset 1px 1px #ffffff,inset -2px -2px #808080,inset 2px 2px #cac4bb;"></div>
<div style="left:483px;top:479px;width:65px;height:20px;background:#fff;box-shadow:inset -1px -1px #ffffff,inset 1px 1px #808080,inset -2px -2px #cac4bb,inset 2px 2px #1c1c1c;"></div>
<div style="left:530px;top:481px;width:16px;height:16px;background:#cac4bb;box-shadow:inset -1px -1px #1c1c1c,inset 1px 1px #ffffff,inset -2px -2px #808080,inset 2px 2px #cac4bb;"></div>
<div style="left:487px;top:483px;font-size:11px;line-height:11px;color:#bcb8b0;font-weight:normal;font-style:normal;letter-spacing:-0.2px;white-space:pre;">32x32</div>
<div style="left:550px;top:479px;width:93px;height:20px;background:#fff;box-shadow:inset -1px -1px #ffffff,inset 1px 1px #808080,inset -2px -2px #cac4bb,inset 2px 2px #1c1c1c;"></div>
<div style="left:627px;top:481px;width:15px;height:16px;background:#cac4bb;box-shadow:inset -1px -1px #1c1c1c,inset 1px 1px #ffffff,inset -2px -2px #808080,inset 2px 2px #cac4bb;"></div>
<div style="left:554px;top:483px;font-size:11px;line-height:11px;color:#bcb8b0;font-weight:normal;font-style:normal;letter-spacing:-0.3px;white-space:pre;">All Formats</div>
<div style="left:483px;top:500px;width:219px;height:21px;background:#fff;box-shadow:inset -1px -1px #ffffff,inset 1px 1px #808080,inset -2px -2px #cac4bb,inset 2px 2px #1c1c1c;"></div>
<div style="left:685px;top:502px;width:16px;height:17px;background:#cac4bb;box-shadow:inset -1px -1px #1c1c1c,inset 1px 1px #ffffff,inset -2px -2px #808080,inset 2px 2px #cac4bb;"></div>
<div style="left:487px;top:504px;font-size:11px;line-height:11px;color:#bcb8b0;font-weight:normal;font-style:normal;letter-spacing:-0.1px;white-space:pre;">E:\Program Files\Actual Drawing\Pictures</div>
<div style="left:483px;top:522px;width:219px;height:61px;background:#fff;box-shadow:inset -1px -1px #ffffff,inset 1px 1px #808080,inset -2px -2px #cac4bb,inset 2px 2px #1c1c1c;"></div>
<div style="left:506px;top:526px;width:32px;height:32px;background:#000040;border:2px solid #c8c4bc;border-top-width:1px;border-left-width:1px"></div>
<div style="left:581px;top:526px;width:32px;height:32px;background:#fff;border:1px solid #c8c4bc;border-right-width:2px;border-bottom-width:2px"></div>
<div style="left:587px;top:527px;width:19px;height:29px;background:#cac4bb"></div>
<div style="left:504px;top:564px;font-size:11px;line-height:11px;color:#bcb8b0;font-weight:normal;font-style:normal;letter-spacing:-0.3px;white-space:pre;">dollar.gif</div>
<div style="left:566px;top:564px;font-size:11px;line-height:11px;color:#bcb8b0;font-weight:normal;font-style:normal;letter-spacing:-0.3px;white-space:pre;">spinning at.gif</div>
<svg style="position:absolute;left:0;top:0" width="708" height="587"><path d="M519 530v2M518 547v2" stroke="#ffc020" stroke-width="1.5"/><path d="M524 535q-1-3-4-3q-4 0-4 3.5q0 3 4 3.5q4 1 4 4q0 3-4 3.5q-3 0-4-3" fill="none" stroke="#ffc020" stroke-width="2.4"/><text x="591" y="541" font-family="Liberation Sans" font-weight="bold" font-size="12" fill="#ff0000">@</text><text x="591" y="554" font-family="Liberation Sans" font-weight="bold" font-size="12" fill="#000">@</text><text x="591" y="554" font-family="Liberation Sans" font-size="12" fill="none" stroke="#cc0000" stroke-width="0.4" stroke-dasharray="1 1">@</text><rect x="653" y="484" width="13" height="9" fill="#ffd040" opacity="0.7"/><rect x="653" y="482" width="6" height="2" fill="#ffd040" opacity="0.7"/><path d="M678 494v-7q0-4 4-4t4 4v3" fill="none" stroke="#00ff00" stroke-width="2.2"/><path d="M683 489h6l-3 4z" fill="#00ff00"/><text x="623.5" y="580.5" font-family="Liberation Sans" font-size="17.5" fill="#f0f0f0" stroke="#a0a0a0" stroke-width="0.6">studna.cz</text></svg>
<div style="left:479px;top:584px;width:227px;height:2px;background:#1c1c1c"></div>
<div style="left:479px;top:586px;width:229px;height:1px;background:#fff"></div>
<svg style="position:absolute;left:462px;top:568px" width="14" height="14"><path d="M1 13L13 1" stroke="#fff" stroke-width="1"/><path d="M2.5 13.5L13.5 2.5" stroke="#505050" stroke-width="1.4"/><path d="M5 13L13 5" stroke="#fff"/><path d="M6.5 13.5L13.5 6.5" stroke="#505050" stroke-width="1.4"/><path d="M9 13L13 9" stroke="#fff"/><path d="M10.5 13.5L13.5 10.5" stroke="#505050" stroke-width="1.4"/></svg>
<div style="left:463px;top:581px;width:13px;height:1px;background:#cac4bb"></div>
<svg style="position:absolute;left:0;top:0" width="708" height="587" viewBox="0 0 708 587"><path d="M19.5 49.5h7l3 3v9h-10z" fill="#fff" stroke="#004000" stroke-width="1.2"/><path d="M26.5 49.5v3h3" fill="none" stroke="#004000"/><path d="M56 54 q4 -5 9 -1" fill="none" stroke="#ff0000" stroke-width="2"/><path d="M63 51l3 3l-4 1z" fill="#ff0000"/><path d="M52 55h5l1 1h6v1h-12z" fill="#66cc99"/><path d="M57 55h6v2h-6z" fill="#c08040"/><path d="M50 61l4-4h12l-4 4z" fill="#004000"/><path d="M50 58h3l-3 3z" fill="#66cc99"/><path d="M62 61l4-4v1l-3 3z" fill="#c08040"/><path d="M88 48h15v16h-12l-3-3z" fill="#4a4a4a"/><rect x="90" y="49" width="11" height="7" fill="#fff"/><rect x="91" y="51" width="9" height="1" fill="#808080"/><rect x="91" y="54" width="9" height="1" fill="#808080"/><rect x="99" y="58" width="2" height="5" fill="#fff"/><rect x="103" y="49" width="1" height="16" fill="#fff"/><rect x="91" y="64" width="13" height="1" fill="#fff"/><rect x="112" y="48" width="15" height="16" fill="#66cc99"/><rect x="114" y="49" width="11" height="7" fill="#fff"/><rect x="115" y="51" width="9" height="1" fill="#c0c0c0"/><rect x="115" y="54" width="9" height="1" fill="#c0c0c0"/><rect x="115" y="58" width="9" height="6" fill="#004000"/><rect x="120" y="59" width="2" height="4" fill="#66cc99"/><path d="M112 48l5 5" stroke="#ff0000" stroke-width="2"/><path d="M118 50v5h-5z" fill="#ff0000"/><path d="M143.5 50.5h8l3 3v10h-11z" fill="#fff" stroke="#000"/><path d="M148 56 a4 4 0 1 0 3 5" fill="none" stroke="#0040c0" stroke-width="2.2"/><path d="M143 58h8" stroke="#0040c0" stroke-width="1.5"/><path d="M140 62 q2-6 10-9" fill="none" stroke="#c0a000" stroke-width="1"/><path d="M137 47l5 5" stroke="#ff0000" stroke-width="2"/><path d="M143 49v5h-5z" fill="#ff0000"/><path d="M176.5 49v3l2.5 3.5M181.5 49v3l-2.5 3.5" fill="none" stroke="#fff" stroke-width="1"/><circle cx="176" cy="60" r="2" fill="none" stroke="#00ff00" stroke-width="1"/><circle cx="182" cy="60" r="2" fill="none" stroke="#00ff00" stroke-width="1"/><path d="M178 56v4M180 56v4" stroke="#00ff00" stroke-width="1"/><rect x="197" y="49" width="7" height="9" fill="#00ff00"/><rect x="199" y="51" width="3" height="1" fill="#fff"/><rect x="199" y="53" width="3" height="1" fill="#fff"/><rect x="203" y="53" width="8" height="10" fill="#fff"/><rect x="205" y="56" width="4" height="1" fill="#a0a0a0"/><rect x="205" y="59" width="4" height="1" fill="#a0a0a0"/><rect x="222" y="49" width="12" height="11" fill="#00ff00"/><rect x="226" y="48" width="5" height="2" fill="#fff"/><rect x="225" y="50" width="7" height="1" fill="#fff"/><rect x="228" y="55" width="8" height="8" fill="#fff"/><rect x="230" y="57" width="4" height="1" fill="#a0a0a0"/><rect x="230" y="60" width="4" height="1" fill="#a0a0a0"/><path d="M260 58q2-4 6-4q4 0 3 4q-1 2-3 3" fill="none" stroke="#4a4a4a" stroke-width="2.6"/><path d="M255 56h7l-2 3h2l-2 2h-5z" fill="#4a4a4a"/><path d="M263 60l2-2" stroke="#fff" stroke-width="1"/><path d="M268 61l1-1" stroke="#fff"/><path d="M289.5 48.5h9l3 3v11h-12z" fill="#fff" stroke="#000"/><rect x="293" y="51" width="3" height="2" fill="#0000c0"/><rect x="292" y="54" width="4" height="1" fill="#0000c0"/><rect x="293" y="55" width="3" height="5" fill="#0000c0"/><rect x="292" y="60" width="5" height="1" fill="#0000c0"/><text x="319.5" y="53.5" font-family="Liberation Mono" font-weight="bold" font-size="7" fill="#000060" textLength="12" lengthAdjust="spacingAndGlyphs">ABC</text><path d="M320.5 58l3.5 3.5l9-9.5" fill="none" stroke="#00ff00" stroke-width="2"/><path d="M326 61l1 1M328 59l1 1" stroke="#404040" stroke-width="0.6"/><path d="M344 58l5-10h1.5l5 10" fill="none" stroke="#00ff00" stroke-width="2"/><path d="M347 54h6" stroke="#00ff00" stroke-width="1.5"/><circle cx="353.5" cy="56" r="6" fill="none" stroke="#d09020" stroke-width="1.5"/><path d="M357.5 60.5l3.5 3.5" stroke="#a02000" stroke-width="1.8"/><rect x="369" y="50" width="18" height="3" fill="#00ff00"/><rect x="372" y="50" width="1" height="3" fill="#cac4bb"/><rect x="376" y="50" width="1" height="3" fill="#cac4bb"/><rect x="380" y="50" width="1" height="3" fill="#cac4bb"/><rect x="384" y="50" width="1" height="3" fill="#cac4bb"/><path d="M370 54v10l12-5z" fill="#00ff00"/><path d="M370 54v10" stroke="#404040"/><path d="M370 64l12-5" stroke="#fff"/><circle cx="252.5" cy="80.5" r="8" fill="#2a9a9a"/><path d="M246 75q3-3 8-3l-2 3-4 2-1 3z" fill="#66cc99"/><path d="M249 77l4-3 3 1-2 3 2 2-4 2-3-2z" fill="#00ff00"/><path d="M254 73q5 1 6 6l-2 3-3-2 1-3z" fill="#0030c0"/><path d="M259 80l1 4-3 2z" fill="#004000"/><path d="M245 81q0 4 3 6l3 1-2-4z" fill="#00ff00"/><path d="M245 84q1 3 4 4" stroke="#202020" fill="none"/><rect x="250.5" y="84.5" width="10" height="4" rx="2" fill="#fff" stroke="#c8c8c8" stroke-width="0.6"/><path d="M252 86.5h2M256 86.5h2" stroke="#0030c0"/><path d="M254 86.5h2" stroke="#808080"/><path d="M16.50 137.00L17.54 135.35L21.96 126.00L24.04 126.00L28.46 135.35L29.50 137.00L24.82 137.00L24.30 134.58L21.70 134.58L21.18 137.00ZM21.44 132.38L23.00 129.30L24.56 132.38Z" fill="#00ff00" fill-rule="evenodd" stroke="#c05a20" stroke-width="0.9" stroke-dasharray="1 1.6"/><rect x="16" y="139" width="10" height="4" fill="#ffc020"/><path d="M27 140h7l-3.5 4z" fill="#ff0000"/><path d="M45 128l3-2 6 5 1 6-2 0-1-4" fill="#004000"/><path d="M44 133l5-4 4 4-4 4z" fill="#66cc99"/><path d="M45 134l3 3" stroke="#fff"/><path d="M43 135l5-6" stroke="#c08040"/><rect x="41" y="139" width="10" height="4" fill="#0020a0"/><path d="M52 140h7l-3.5 4z" fill="#ff0000"/><path d="M75.00 142.00L76.04 140.28L80.46 130.50L82.54 130.50L86.96 140.28L88.00 142.00L83.32 142.00L82.80 139.47L80.20 139.47L79.68 142.00ZM79.94 137.17L81.50 133.95L83.06 137.17Z" fill="#00ff00" fill-rule="evenodd" stroke="#c05a20" stroke-width="0.9" stroke-dasharray="1 1.6"/><path d="M84 130h7l-3.5-4z" fill="#ff0000"/><path d="M101.00 140.50L101.96 139.00L106.04 130.50L107.96 130.50L112.04 139.00L113.00 140.50L108.68 140.50L108.20 138.30L105.80 138.30L105.32 140.50ZM105.56 136.30L107.00 133.50L108.44 136.30Z" fill="#00ff00" fill-rule="evenodd" stroke="#000" stroke-width="0.9" stroke-dasharray="1 1.6"/><path d="M109 128h7l-3.5 4z" fill="#ff0000"/><text x="136.5" y="141.5" font-family="Liberation Serif" font-weight="bold" font-size="14.5" fill="#66cc99" stroke="#c06020" stroke-width="0.4" stroke-dasharray="1 2">B</text><text x="161" y="141.5" font-family="Liberation Serif" font-weight="bold" font-style="italic" font-size="14.5" fill="#66cc99" stroke="#c06020" stroke-width="0.4" stroke-dasharray="1 2">I</text><text x="185.5" y="139" font-family="Liberation Serif" font-weight="bold" font-size="12" fill="#00ff00">U</text><rect x="186" y="139" width="9" height="2" fill="#00ff00"/><path d="M214.5 128.5h5M217 126v5" stroke="#404040" stroke-width="1"/><text x="218.5" y="141" font-family="Liberation Sans" font-weight="bold" font-size="15" fill="#404040" stroke="#404040" stroke-width="0.6">Ω</text><path d="M227 141h6l-3 3z" fill="#404040"/><path d="M239.5 128.5h5M242 126v5" stroke="#404040" stroke-width="1"/><rect x="240.5" y="133.5" width="17" height="3" fill="#fff" stroke="#404040"/><rect x="276" y="129" width="14" height="14" fill="#cac4bb"/><rect x="358" y="128" width="3" height="3" fill="#ff0000"/><rect x="358" y="133" width="3" height="3" fill="#ff0000"/><rect x="358" y="138" width="3" height="3" fill="#ff0000"/><rect x="384" y="129" width="3" height="1" fill="#404040"/><rect x="385" y="130" width="3" height="1" fill="#ffffff"/><rect x="389" y="129" width="9" height="1" fill="#404040"/><rect x="390" y="130" width="9" height="1" fill="#ffffff"/><rect x="389" y="131" width="9" height="2" fill="#404040"/><rect x="390" y="133" width="9" height="1" fill="#ffffff"/><rect x="389" y="134" width="6" height="2" fill="#404040"/><rect x="390" y="136" width="6" height="1" fill="#ffffff"/><rect x="384" y="137" width="14" height="1" fill="#404040"/><rect x="385" y="138" width="14" height="1" fill="#ffffff"/><rect x="384" y="139" width="6" height="1" fill="#404040"/><rect x="385" y="140" width="6" height="1" fill="#ffffff"/><rect x="389" y="127" width="1" height="1" fill="#404040"/><rect x="390" y="128" width="1" height="1" fill="#ffffff"/><rect x="389" y="129" width="1" height="1" fill="#404040"/><rect x="390" y="130" width="1" height="1" fill="#ffffff"/><rect x="389" y="131" width="1" height="1" fill="#404040"/><rect x="390" y="132" width="1" height="1" fill="#ffffff"/><rect x="389" y="133" width="1" height="1" fill="#404040"/><rect x="390" y="134" width="1" height="1" fill="#ffffff"/><rect x="389" y="135" width="1" height="1" fill="#404040"/><rect x="390" y="136" width="1" height="1" fill="#ffffff"/><rect x="389" y="137" width="1" height="1" fill="#404040"/><rect x="390" y="138" width="1" height="1" fill="#ffffff"/><rect x="389" y="139" width="1" height="1" fill="#404040"/><rect x="390" y="140" width="1" height="1" fill="#ffffff"/><rect x="389" y="141" width="1" height="1" fill="#404040"/><rect x="390" y="142" width="1" height="1" fill="#ffffff"/><rect x="389" y="143" width="1" height="1" fill="#404040"/><rect x="390" y="144" width="1" height="1" fill="#ffffff"/><path d="M382 133l3-3v6z" fill="#404040"/><rect x="384" y="132" width="4" height="2" fill="#404040"/><rect x="409" y="129" width="3" height="1" fill="#404040"/><rect x="410" y="130" width="3" height="1" fill="#ffffff"/><rect x="414" y="129" width="9" height="1" fill="#404040"/><rect x="415" y="130" width="9" height="1" fill="#ffffff"/><rect x="414" y="131" width="9" height="2" fill="#404040"/><rect x="415" y="133" width="9" height="1" fill="#ffffff"/><rect x="414" y="134" width="6" height="2" fill="#404040"/><rect x="415" y="136" width="6" height="1" fill="#ffffff"/><rect x="409" y="137" width="14" height="1" fill="#404040"/><rect x="410" y="138" width="14" height="1" fill="#ffffff"/><rect x="409" y="139" width="6" height="1" fill="#404040"/><rect x="410" y="140" width="6" height="1" fill="#ffffff"/><rect x="414" y="127" width="1" height="1" fill="#404040"/><rect x="415" y="128" width="1" height="1" fill="#ffffff"/><rect x="414" y="129" width="1" height="1" fill="#404040"/><rect x="415" y="130" width="1" height="1" fill="#ffffff"/><rect x="414" y="131" width="1" height="1" fill="#404040"/><rect x="415" y="132" width="1" height="1" fill="#ffffff"/><rect x="414" y="133" width="1" height="1" fill="#404040"/><rect x="415" y="134" width="1" height="1" fill="#ffffff"/><rect x="414" y="135" width="1" height="1" fill="#404040"/><rect x="415" y="136" width="1" height="1" fill="#ffffff"/><rect x="414" y="137" width="1" height="1" fill="#404040"/><rect x="415" y="138" width="1" height="1" fill="#ffffff"/><rect x="414" y="139" width="1" height="1" fill="#404040"/><rect x="415" y="140" width="1" height="1" fill="#ffffff"/><rect x="414" y="141" width="1" height="1" fill="#404040"/><rect x="415" y="142" width="1" height="1" fill="#ffffff"/><rect x="414" y="143" width="1" height="1" fill="#404040"/><rect x="415" y="144" width="1" height="1" fill="#ffffff"/><path d="M413 133l-3-3v6z" fill="#404040"/><rect x="407" y="132" width="4" height="2" fill="#404040"/><rect x="440" y="130" width="18" height="11" rx="1" fill="#404040"/><rect x="442" y="133" width="4" height="2" fill="#fff"/><rect x="447" y="133" width="4" height="2" fill="#fff"/><rect x="452" y="133" width="4" height="2" fill="#fff"/><rect x="442" y="137" width="4" height="2" fill="#fff"/><rect x="447" y="137" width="4" height="2" fill="#fff"/><rect x="452" y="137" width="4" height="2" fill="#fff"/><path d="M465 135h6l-3 3z" fill="#404040"/><path d="M12.5 162.5v13l3-3 3.5 5.5 2-1-3.5-5.5h4.5z" fill="#fff" stroke="#b0b0b0" stroke-width="0.7"/><path d="M7 189.5h5.5M9.75 186.75v5.5" stroke="#ff0000" stroke-width="1.5"/><path d="M7 213.5h5.5M9.75 210.75v5.5" stroke="#ff0000" stroke-width="1.5"/><path d="M7 235.5h5.5M9.75 232.75v5.5" stroke="#ff0000" stroke-width="1.5"/><path d="M7 261.5h5.5M9.75 258.75v5.5" stroke="#ff0000" stroke-width="1.5"/><path d="M7 284.5h5.5M9.75 281.75v5.5" stroke="#ff0000" stroke-width="1.5"/><path d="M7 307.5h5.5M9.75 304.75v5.5" stroke="#ff0000" stroke-width="1.5"/><path d="M7 331.5h5.5M9.75 328.75v5.5" stroke="#ff0000" stroke-width="1.5"/><path d="M7 355.5h5.5M9.75 352.75v5.5" stroke="#ff0000" stroke-width="1.5"/><path d="M7 379.5h5.5M9.75 376.75v5.5" stroke="#ff0000" stroke-width="1.5"/><path d="M7 403.5h5.5M9.75 400.75v5.5" stroke="#ff0000" stroke-width="1.5"/><path d="M7 427.5h5.5M9.75 424.75v5.5" stroke="#ff0000" stroke-width="1.5"/><rect x="12.5" y="190.5" width="11" height="11" fill="#fff" stroke="#004000"/><circle cx="20" cy="194" r="1.6" fill="#ffc020"/><path d="M14 201l3-4 2 2 2-3 2 5z" fill="#00c000"/><path d="M9.00 223.00L10.04 221.35L14.46 212.00L16.54 212.00L20.96 221.35L22.00 223.00L17.32 223.00L16.80 220.58L14.20 220.58L13.68 223.00ZM13.94 218.38L15.50 215.30L17.06 218.38Z" fill="#00ff00" fill-rule="evenodd" stroke="#c05a20" stroke-width="0.9" stroke-dasharray="1 1.6"/><rect x="12" y="238" width="12" height="12" fill="#fff"/><text x="13" y="244" font-family="Liberation Mono" font-size="6.5" fill="#a0a0a0" textLength="7" lengthAdjust="spacingAndGlyphs">AB</text><rect x="13" y="245" width="2" height="1" fill="#a0a0a0"/><rect x="13" y="247" width="2" height="1" fill="#a0a0a0"/><path d="M16 245h1v1h1v-1h1v1h1v-1h1v1h1v2h-6z" fill="#0020a0"/><rect x="16" y="248" width="7" height="1" fill="#0020a0"/><rect x="13" y="265" width="10" height="7" fill="#00ff00"/><path d="M14 287h7l2 2v4l-2 2h-7l-2-2v-4z" fill="#00ff00"/><rect x="7.5" y="311.5" width="16" height="9" fill="#fff" stroke="#a08040"/><text x="9" y="318.5" font-family="Liberation Sans" font-weight="bold" font-size="6.5" fill="#000080" textLength="13" lengthAdjust="spacingAndGlyphs">HOME</text><rect x="8" y="321" width="16" height="1" fill="#404040"/><path d="M14.5 337.5l2-2M14.5 341.5l1.5-1.5M15 342.5h6M15.5 341v4" stroke="#fff" stroke-width="1"/><rect x="9" y="360" width="16" height="10" fill="#404040"/><rect x="8" y="359" width="16" height="10" fill="#00ff00"/><rect x="10" y="360.5" width="3" height="1.5" fill="#f0e0f0"/><rect x="10" y="362.0" width="3" height="0.7" fill="#8040a0"/><rect x="10" y="363.5" width="3" height="1.5" fill="#f0e0f0"/><rect x="10" y="365.0" width="3" height="0.7" fill="#8040a0"/><rect x="10" y="366.5" width="3" height="1.5" fill="#f0e0f0"/><rect x="10" y="368.0" width="3" height="0.7" fill="#8040a0"/><rect x="15" y="360.5" width="3" height="1.5" fill="#f0e0f0"/><rect x="15" y="362.0" width="3" height="0.7" fill="#8040a0"/><rect x="15" y="363.5" width="3" height="1.5" fill="#f0e0f0"/><rect x="15" y="365.0" width="3" height="0.7" fill="#8040a0"/><rect x="15" y="366.5" width="3" height="1.5" fill="#f0e0f0"/><rect x="15" y="368.0" width="3" height="0.7" fill="#8040a0"/><rect x="20" y="360.5" width="3" height="1.5" fill="#f0e0f0"/><rect x="20" y="362.0" width="3" height="0.7" fill="#8040a0"/><rect x="20" y="363.5" width="3" height="1.5" fill="#f0e0f0"/><rect x="20" y="365.0" width="3" height="0.7" fill="#8040a0"/><rect x="20" y="366.5" width="3" height="1.5" fill="#f0e0f0"/><rect x="20" y="368.0" width="3" height="0.7" fill="#8040a0"/><rect x="9" y="382" width="16" height="13" fill="#000080"/><text x="12" y="388.5" font-family="Liberation Sans" font-weight="bold" font-size="7" fill="#ffb020" textLength="9" lengthAdjust="spacingAndGlyphs">3D</text><text x="10" y="394.5" font-family="Liberation Sans" font-weight="bold" font-size="7" fill="#00ff00" stroke="#c02000" stroke-width="0.3" textLength="13" lengthAdjust="spacingAndGlyphs">GIF</text><path d="M13.5 404.5h7l3.5 3.5v10h-10.5z" fill="#fff" stroke="#202020"/><path d="M20.5 404.5v3.5h3.5" fill="none" stroke="#202020"/><circle cx="15" cy="412" r="3.8" fill="none" stroke="#0030c0" stroke-width="2.2"/><path d="M11 412h8" stroke="#0030c0" stroke-width="1.5"/><path d="M16 414h3" stroke="#fff" stroke-width="1.2"/><path d="M10 416q2-7 10-9" fill="none" stroke="#d0a000" stroke-width="1"/><rect x="13.5" y="429.5" width="10" height="12" fill="#fff" stroke="#202020"/><circle cx="15" cy="432" r="5" fill="#0030c0"/><path d="M10.5 431q1-4 5-4.5l2 2-2 3 1 3-3 1z" fill="#00c000"/><path d="M15 427.5l4 1.5-1 3z" fill="#40c0c0"/><path d="M11 441l11-9" stroke="#ff0000" stroke-width="2.2"/><path d="M11 441l3-2.5" stroke="#ffd000" stroke-width="2.2"/><rect x="20" y="438" width="3" height="2" fill="#30a0c0"/><path d="M11 460l11 10M22 460l-11 10" stroke="#ff0000" stroke-width="1.8"/><path d="M14 469l-3 1" stroke="#404080" stroke-width="1"/><rect x="14.5" y="497.5" width="6" height="8" fill="#00ff00" stroke="#002000"/><rect x="12" y="494" width="5" height="6" fill="#fff"/><path d="M23 499v-4q0-3-3-3h-1" fill="none" stroke="#ff0000" stroke-width="1.2"/><path d="M17.5 492l3-3v6z" fill="#ff0000"/><rect x="11.5" y="521.5" width="6" height="8" fill="#00ff00" stroke="#002000"/><rect x="9" y="518" width="5" height="7" fill="#fff"/><path d="M16 518.5h4q2 0 2 2v3" fill="none" stroke="#ff0000" stroke-width="1.2"/><path d="M19 523h6l-3 3z" fill="#ff0000"/></svg>
<svg style="position:absolute;left:0;top:0" width="708" height="587" viewBox="0 0 708 587"><rect x="10.5" y="6.5" width="11" height="14" fill="#fff" stroke="#101010" stroke-width="1"/><path d="M14 8h6" stroke="#30a0b0" stroke-width="1.5"/><circle cx="11" cy="10" r="5" fill="#0030c0"/><path d="M6 10q0-4 4-5l3 1-2 2 2 2-3 2 1 3-2 0z" fill="#40c0a0"/><path d="M7 12l2 1 1 2-2-1z" fill="#00ff00"/><path d="M11 6l3 1-1 2-2-1z" fill="#00ff00"/><path d="M14 13l2-1v3z" fill="#004000"/><path d="M6.5 9l1.5-1" stroke="#fff"/><path d="M12 19l9-8" stroke="#ff0000" stroke-width="2.2"/><path d="M12 19l4-3.5" stroke="#ffc000" stroke-width="2.2"/><path d="M12 19l1.5-1.3" stroke="#fff" stroke-width="2"/><rect x="17" y="18" width="3" height="2" fill="#30a0c0"/><rect x="12.5" y="25.5" width="11" height="14" fill="#fff" stroke="#101010" stroke-width="1"/><path d="M16 27h6" stroke="#30a0b0" stroke-width="1.5"/><circle cx="13" cy="29" r="5" fill="#0030c0"/><path d="M8 29q0-4 4-5l3 1-2 2 2 2-3 2 1 3-2 0z" fill="#40c0a0"/><path d="M9 31l2 1 1 2-2-1z" fill="#00ff00"/><path d="M13 25l3 1-1 2-2-1z" fill="#00ff00"/><path d="M16 32l2-1v3z" fill="#004000"/><path d="M8.5 28l1.5-1" stroke="#fff"/><path d="M14 38l9-8" stroke="#ff0000" stroke-width="2.2"/><path d="M14 38l4-3.5" stroke="#ffc000" stroke-width="2.2"/><path d="M14 38l1.5-1.3" stroke="#fff" stroke-width="2"/><rect x="19" y="37" width="3" height="2" fill="#30a0c0"/></svg>
</div></body></html>
